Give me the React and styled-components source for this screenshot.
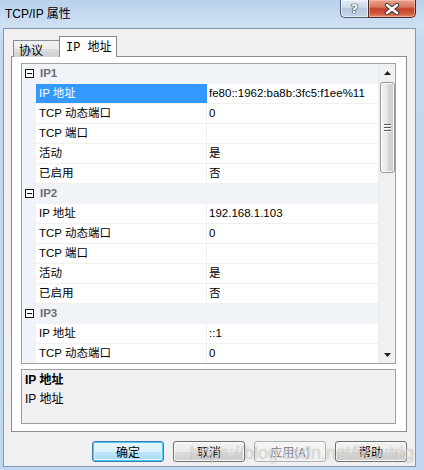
import React from 'react'
import styled, { createGlobalStyle, css } from 'styled-components'

const GlobalStyle = createGlobalStyle`
  html, body {
    margin: 0;
    padding: 0;
    background: #c4d9f0;
  }
  body {
    font-family: "Liberation Sans", "Noto Sans CJK SC", sans-serif;
    font-size: 12px;
    color: #000;
  }
  * { box-sizing: border-box; }
`

const groups = [
  {
    name: 'IP1',
    rows: [
      ['IP 地址', 'fe80::1962:ba8b:3fc5:f1ee%11', true],
      ['TCP 动态端口', '0'],
      ['TCP 端口', ''],
      ['活动', '是'],
      ['已启用', '否'],
    ],
  },
  {
    name: 'IP2',
    rows: [
      ['IP 地址', '192.168.1.103'],
      ['TCP 动态端口', '0'],
      ['TCP 端口', ''],
      ['活动', '是'],
      ['已启用', '否'],
    ],
  },
  {
    name: 'IP3',
    rows: [
      ['IP 地址', '::1'],
      ['TCP 动态端口', '0'],
    ],
  },
]

function App() {
  return (
    <>
      <GlobalStyle />
      <Window>
        <TitleBar>
          <Title>TCP/IP 属性</Title>
          <Caption>
            <HelpButton>?</HelpButton>
            <CloseButton>
              <svg width="16" height="12" viewBox="0 0 16 12">
                <path d="M3 2 L13 10 M13 2 L3 10" stroke="#3a3a3a" strokeWidth="4.4" strokeLinecap="round" />
                <path d="M3 2 L13 10 M13 2 L3 10" stroke="#fff" strokeWidth="2.4" strokeLinecap="round" />
              </svg>
            </CloseButton>
          </Caption>
        </TitleBar>

        <Client>
          <TabStrip>
            <Tab>协议</Tab>
            <Tab active>IP 地址</Tab>
          </TabStrip>

          <Page>
            <Grid>
              <List>
                {groups.map(g => (
                  <React.Fragment key={g.name}>
                    <CategoryRow>
                      <Gutter>
                        <Toggle />
                      </Gutter>
                      <CategoryName>{g.name}</CategoryName>
                    </CategoryRow>
                    {g.rows.map(([label, value, selected], i) => (
                      <Row key={i}>
                        <Gutter />
                        <Label selected={selected}>{label}</Label>
                        <Value>{value}</Value>
                      </Row>
                    ))}
                  </React.Fragment>
                ))}
              </List>
              <ScrollBar>
                <Arrow>
                  <svg width="7" height="4" viewBox="0 0 7 4"><path d="M3.5 0 L7 4 L0 4 Z" fill="#222" /></svg>
                </Arrow>
                <Thumb>
                  <Grip />
                  <Grip />
                  <Grip />
                </Thumb>
                <Track />
                <Arrow>
                  <svg width="7" height="4" viewBox="0 0 7 4"><path d="M0 0 L7 0 L3.5 4 Z" fill="#222" /></svg>
                </Arrow>
              </ScrollBar>
            </Grid>

            <Description>
              <DescTitle>IP 地址</DescTitle>
              <div>IP 地址</div>
            </Description>
          </Page>

          <ButtonBar>
            <Button variant="default">确定</Button>
            <Button>取消</Button>
            <Button variant="disabled">应用(A)</Button>
            <Button>帮助</Button>
          </ButtonBar>
        </Client>

        <Watermark>https://blog.csdn.net/ikoutrig</Watermark>
      </Window>
    </>
  )
}

const Window = styled.div`
  position: relative;
  width: 424px;
  height: 470px;
  display: flex;
  flex-direction: column;
  overflow: hidden;
  background: linear-gradient(180deg, #b9d1ec 0px, #cfe0f3 26px, #c4d9f0 40px, #c1d7ef 100%);
`

const TitleBar = styled.div`
  height: 28px;
  display: flex;
  justify-content: space-between;
  align-items: flex-start;
  padding-left: 5px;
  padding-right: 8px;
  flex-shrink: 0;
`

const Title = styled.div`
  line-height: 29px;
  font-size: 12px;
  color: #000;
`

const Caption = styled.div`
  display: flex;
`

const HelpButton = styled.div`
  width: 28px;
  height: 18px;
  border: 1px solid #4d5e76;
  border-top: none;
  border-right: none;
  border-radius: 0 0 0 5px;
  background: linear-gradient(180deg, #e4ecf6 0%, #ccd9e9 45%, #b5c6dc 50%, #c6d5e7 100%);
  box-shadow: inset 0 0 0 1px rgba(255, 255, 255, 0.55);
  display: flex;
  align-items: center;
  justify-content: center;
  font-family: "DejaVu Sans", sans-serif;
  font-weight: bold;
  font-size: 13px;
  color: #fff;
  text-shadow: 0 0 1px #222, 0 0 1px #222, 0 0 1px #222;
`

const CloseButton = styled.div`
  width: 48px;
  height: 18px;
  border: 1px solid #4d2a24;
  border-top: none;
  border-radius: 0 0 5px 0;
  background: linear-gradient(180deg, #eaa28f 0%, #d97a60 40%, #c2432a 52%, #cf5a3c 80%, #e1876b 100%);
  box-shadow: inset 0 0 0 1px rgba(255, 210, 195, 0.5);
  display: flex;
  align-items: center;
  justify-content: center;
`

const Client = styled.div`
  flex: 1;
  margin: 0 8px 3px 3px;
  border: 1px solid #8597b0;
  background: #f0f0f0;
  padding: 7px 8px 0 7px;
  display: flex;
  flex-direction: column;
`

const TabStrip = styled.div`
  display: flex;
  align-items: flex-end;
  height: 21px;
  padding-left: 2px;
  margin-bottom: -1px;
  position: relative;
  z-index: 1;
`

const Tab = styled.div`
  border: 1px solid #898c95;
  border-bottom: none;
  display: flex;
  align-items: center;
  ${p => p.active ? css`
    width: 58px;
    height: 21px;
    background: #fff;
    padding-left: 6px;
    padding-bottom: 2px;
    font-family: "Liberation Mono", "Noto Sans CJK SC", monospace;
    font-size: 12px;
  ` : css`
    width: 46px;
    height: 17px;
    border-right: none;
    background: linear-gradient(180deg, #f2f2f2 0%, #ebebeb 50%, #dddddd 50%, #cfcfcf 100%);
    padding-left: 5px;
    font-family: "Noto Sans CJK SC", sans-serif;
    font-size: 12px;
  `}
`

const Page = styled.div`
  height: 376px;
  border: 1px solid #898c95;
  background: #fff;
  padding: 6px 10px 7px 9px;
  display: flex;
  flex-direction: column;
  gap: 5px;
`

const Grid = styled.div`
  height: 301px;
  border: 1px solid #a0a0a0;
  display: flex;
  flex-shrink: 0;
  background: #fff;
`

const List = styled.div`
  flex: 1;
  overflow: hidden;
  font-size: 11.5px;
`

const rowBase = css`
  display: grid;
  grid-template-columns: 14px 171px 1fr;
  height: 20px;
  line-height: 19px;
  border-bottom: 1px solid #f0f0f0;
`

const CategoryRow = styled.div`
  ${rowBase};
  background: #f0f4f9;
  border-bottom-color: #f0f4f9;
`

const Row = styled.div`
  ${rowBase};
`

const Gutter = styled.div`
  background: #f0f4f9;
  padding: 5px 0 0 3px;
`

const Toggle = styled.div`
  width: 9px;
  height: 9px;
  border: 1px solid #1a1a1a;
  background: #fff;
  display: flex;
  align-items: center;
  justify-content: center;
  &::after {
    content: '';
    width: 5px;
    height: 1px;
    background: #000;
  }
`

const CategoryName = styled.div`
  grid-column: 2 / 4;
  padding-left: 4px;
  font-weight: bold;
  color: #6d6d6d;
`

const Label = styled.div`
  padding-left: 3px;
  border-right: 1px solid #f0f0f0;
  white-space: nowrap;
  ${p => p.selected && css`
    background: #3399ff;
    color: #fff;
    border-right-color: #3399ff;
  `}
`

const Value = styled.div`
  padding-left: 2px;
  white-space: nowrap;
  overflow: hidden;
`

const ScrollBar = styled.div`
  width: 17px;
  display: flex;
  flex-direction: column;
  align-items: center;
  background: #f0f0f0;
  border-left: 1px solid #ececec;
`

const Arrow = styled.div`
  width: 100%;
  height: 17px;
  display: flex;
  align-items: center;
  justify-content: center;
  flex-shrink: 0;
`

const Thumb = styled.div`
  width: 15px;
  height: 91px;
  margin-top: 1px;
  border: 1px solid #979797;
  border-radius: 3px;
  background: linear-gradient(90deg, #f3f3f3 0%, #e8e8e8 45%, #d6d6d6 55%, #cfcfcf 100%);
  box-shadow: inset 0 0 0 1px #fafafa;
  display: flex;
  flex-direction: column;
  align-items: center;
  justify-content: center;
  gap: 2px;
`

const Grip = styled.div`
  width: 7px;
  height: 1px;
  background: #5a5a5a;
  box-shadow: 0 1px 0 #fff;
`

const Track = styled.div`
  flex: 1;
`

const Description = styled.div`
  height: 55px;
  flex-shrink: 0;
  border: 1px solid #a0a0a0;
  background: #f0f0f0;
  padding: 1px 3px 0;
  line-height: 19px;
  font-size: 12px;
`

const DescTitle = styled.div`
  font-weight: bold;
`

const Button = styled.div`
  width: 72px;
  height: 21px;
  border-radius: 3px;
  display: flex;
  align-items: center;
  justify-content: center;
  font-family: "Noto Sans CJK SC", sans-serif;
  font-size: 12px;
  border: 1px solid #707070;
  background: linear-gradient(180deg, #f2f2f2 0%, #ebebeb 50%, #dddddd 50%, #cfcfcf 100%);
  box-shadow: inset 0 0 0 1px #fbfbfb;
  ${p => p.variant === 'default' && css`
    border-color: #3c7fb1;
    background: linear-gradient(180deg, #eaf6fd 0%, #d9f0fc 50%, #bee6fd 50%, #a7d9f5 100%);
    box-shadow: inset 0 0 0 1px #4cc4f5, inset 0 0 0 2px #e0f4fe;
  `}
  ${p => p.variant === 'disabled' && css`
    border-color: #adb2b5;
    background: #f4f4f4;
    box-shadow: none;
    color: #838383;
  `}
`

const ButtonBar = styled.div`
  display: flex;
  justify-content: flex-end;
  gap: 9px;
  margin-top: 9px;
`

const Watermark = styled.div`
  position: absolute;
  left: 190px;
  top: 442px;
  font-family: "Liberation Sans", sans-serif;
  font-size: 18px;
  line-height: 22px;
  color: rgba(255, 255, 255, 0.6);
  text-shadow: 0 0 1px rgba(60, 60, 60, 0.45);
  white-space: nowrap;
  pointer-events: none;
`

export default App
